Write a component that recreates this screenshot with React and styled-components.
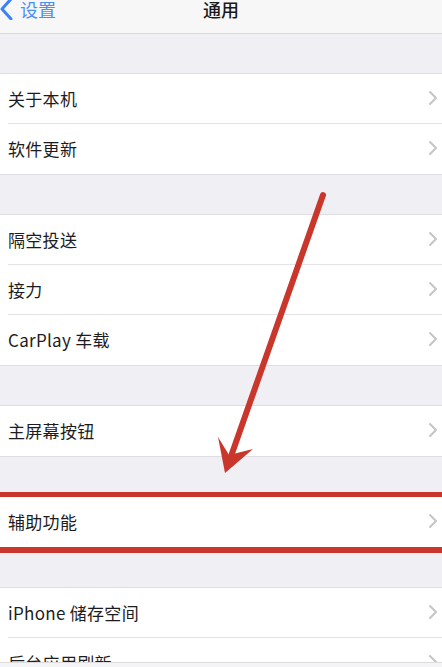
import React from 'react';
import styled, { createGlobalStyle } from 'styled-components';

const GlobalStyle = createGlobalStyle`
  html, body {
    margin: 0;
    padding: 0;
    background: #efeff4;
  }
  body {
    font-family: "Noto Sans CJK SC", "Liberation Sans", sans-serif;
  }
`;

const RED = '#c9372c';

const sections = [
  { gap: 39, items: ['关于本机', '软件更新'] },
  { gap: 39, items: ['隔空投送', '接力', 'CarPlay 车载'] },
  { gap: 39, items: ['主屏幕按钮'] },
  { gap: 35, items: ['辅助功能'], highlighted: true },
  { gap: 34, items: ['iPhone 储存空间', '后台应用刷新'] },
];

const Chevron = ({ color = '#c4c4c9' }) => (
  <svg width="10" height="16" viewBox="0 0 10 16">
    <polyline points="2,2 8,8 2,14" fill="none" stroke={color} strokeWidth="2" strokeLinecap="round" strokeLinejoin="round" />
  </svg>
);

const BackChevron = () => (
  <svg width="14" height="22" viewBox="0 0 14 22">
    <polyline points="11,1 2,11 11,21" fill="none" stroke="#3a82f7" strokeWidth="3" strokeLinecap="round" strokeLinejoin="round" />
  </svg>
);

const App = () => {
  return (
    <>
      <GlobalStyle />
      <Screen>
        <NavBar>
          <Back>
            <BackChevron />
            <BackLabel>设置</BackLabel>
          </Back>
          <Title>通用</Title>
        </NavBar>
        <List>
          {sections.map((section, i) => (
            <React.Fragment key={i}>
              <Gap size={section.gap} />
              <Group highlighted={section.highlighted}>
                {section.items.map((label, j) => (
                  <Row key={label} last={j === section.items.length - 1}>
                    <Label>{label}</Label>
                    <Chevron />
                  </Row>
                ))}
              </Group>
            </React.Fragment>
          ))}
        </List>
        <BottomStrip />
        <Arrow viewBox="0 0 442 667" width="442" height="667">
          <line x1="323" y1="195" x2="229" y2="462" stroke={RED} strokeWidth="6" strokeLinecap="round" />
          <polygon points="225,473 218,437 229,455 253,449" fill={RED} />
        </Arrow>
      </Screen>
    </>
  );
};

const Screen = styled.div`
  position: relative;
  width: 442px;
  height: 667px;
  overflow: hidden;
  display: flex;
  flex-direction: column;
  background: #efeff4;
`;

const NavBar = styled.div`
  position: relative;
  height: 33px;
  flex-shrink: 0;
  display: flex;
  align-items: flex-start;
  justify-content: center;
  background: #f7f7f7;
  border-bottom: 1px solid #d9d9dc;
`;

const Back = styled.div`
  position: absolute;
  left: 0;
  top: -2px;
  display: flex;
  align-items: center;
  gap: 6px;
`;

const BackLabel = styled.span`
  font-size: 18px;
  line-height: 22px;
  color: #4a8ff5;
`;

const Title = styled.div`
  margin-top: -3px;
  font-size: 18px;
  line-height: 24px;
  font-weight: 500;
  color: #1a1a1a;
`;

const List = styled.div`
  flex: 1;
  overflow: hidden;
  display: flex;
  flex-direction: column;
`;

const Gap = styled.div`
  height: ${p => p.size}px;
  flex-shrink: 0;
`;

const Group = styled.div`
  flex-shrink: 0;
  background: #fff;
  border-top: ${p => (p.highlighted ? `5px solid ${RED}` : '1px solid #dedee2')};
  border-bottom: ${p => (p.highlighted ? `6px solid ${RED}` : '1px solid #dedee2')};
`;

const Row = styled.div`
  position: relative;
  height: 50px;
  display: flex;
  align-items: center;
  justify-content: space-between;
  padding: 0 4px 2px 8px;
  box-sizing: border-box;

  &::after {
    content: '';
    display: ${p => (p.last ? 'none' : 'block')};
    position: absolute;
    left: 8px;
    right: 0;
    bottom: 0;
    height: 1px;
    background: #e4e4e6;
  }
`;

const Label = styled.span`
  font-size: 17px;
  color: #1c1c1e;
  letter-spacing: 0.3px;
`;

const BottomStrip = styled.div`
  height: 4px;
  flex-shrink: 0;
  background: #f4f4f6;
  border-top: 1px solid #dcdcdf;
`;

const Arrow = styled.svg`
  position: absolute;
  left: 0;
  top: 0;
  pointer-events: none;
`;

export default App;
